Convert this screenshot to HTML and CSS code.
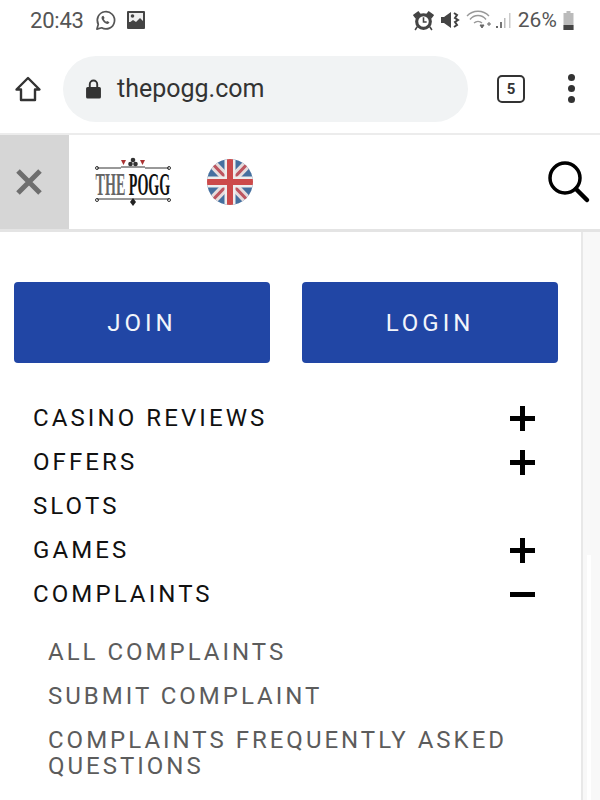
FILE: index.html
```html
<!DOCTYPE html>
<html lang="en">

<head>
  <meta charset="UTF-8">
  <meta name="viewport" content="width=device-width, initial-scale=1.0">
  <title>The Pogg</title>
  <link rel="stylesheet" href="styles.css">
</head>

<body>
  <!-- Phone status bar -->
  <div class="status-bar">
    <div class="status-left">
      <span class="status-time">20:43</span>
      <svg class="status-icon" viewBox="0 0 24 24" width="23" height="23">
        <path d="M3 21l1.500-5A9 9 0 1 1 8 19.600z" fill="none" stroke="#555" stroke-width="1.800" stroke-linejoin="round"/>
        <path d="M8.500 7.500c-1 1-1 2.800 1 5.200s4.500 3.500 5.700 2.500l1-1.300-2.500-1.500-1 .8c-1-.4-2-1.500-2.500-2.700l.9-1-1.300-2.500z" fill="#555"/>
      </svg>
      <svg class="status-icon" viewBox="0 0 18 18" width="18" height="18">
        <rect x="0" y="0" width="18" height="18" rx="1" fill="#444"/>
        <rect x="2" y="2" width="14" height="9" fill="#eee"/>
        <circle cx="5.500" cy="5" r="1.800" fill="#444"/>
        <path d="M2 12l4-3 3 2 4-4 3 3v2H2z" fill="#444"/>
      </svg>
    </div>
    <div class="status-right">
      <svg class="status-icon" viewBox="0 0 20 20" width="21" height="21">
        <circle cx="10" cy="11" r="6.500" fill="none" stroke="#444" stroke-width="3"/>
        <path d="M10 7v4.500h3" fill="none" stroke="#444" stroke-width="1.500"/>
        <path d="M1 5l4-3 1.500 2-4 3zM19 5l-4-3-1.500 2 4 3zM4 16l-2 3M16 16l2 3" fill="#444" stroke="#444" stroke-width="1.500"/>
      </svg>
      <svg class="status-icon" viewBox="0 0 20 20" width="20" height="20">
        <path d="M1 7h3l7-5v16l-7-5H1z" fill="#444"/>
        <path d="M14 3l3 2-2 3 3 2-3 2 2 3-3 2" fill="none" stroke="#444" stroke-width="2"/>
      </svg>
      <svg class="status-icon" viewBox="0 0 46 20" width="46" height="20">
        <path d="M1 6a15 15 0 0 1 22 0M4 9.500a10 10 0 0 1 16 0M8 13a6 6 0 0 1 8 0" fill="none" stroke="#999" stroke-width="1.400"/>
        <path d="M14 15l2 3 2-3zM21 14h4M23 12v4" fill="#666" stroke="#666"/>
        <rect x="30" y="16" width="2" height="2" fill="#666"/>
        <rect x="34" y="12" width="2" height="6" fill="#777"/>
        <rect x="38" y="8" width="1.500" height="10" fill="#bbb"/>
        <rect x="43" y="3" width="1.500" height="15" fill="#ccc"/>
      </svg>
      <span class="status-battery">26%</span>
      <svg class="status-icon" viewBox="0 0 11 19" width="11" height="19">
        <path d="M3.500 0h4v2h3v17H.5V2h3z" fill="#bbb"/>
        <rect x=".5" y="14" width="10" height="5" fill="#444"/>
      </svg>
    </div>
  </div>

  <!-- Browser toolbar -->
  <div class="browser-bar">
    <svg class="home-icon" viewBox="0 0 28 28" width="28" height="28">
      <path d="M2.500 14.500L14 3l11.500 11.500H21V25H7V14.500z" fill="none" stroke="#333" stroke-width="2.400" stroke-linejoin="round"/>
    </svg>
    <div class="url-box">
      <svg viewBox="0 0 16 20" width="17" height="22">
        <path d="M4.500 8V5.500a3.500 3.500 0 0 1 7 0V8" fill="none" stroke="#333" stroke-width="1.800"/>
        <rect x="1" y="8" width="14" height="11" rx="1.500" fill="#333"/>
      </svg>
      <span>thepogg.com</span>
    </div>
    <div class="tab-count">5</div>
    <div class="more-dots"><i></i><i></i><i></i></div>
  </div>

  <!-- Site header -->
  <header class="site-header">
    <div class="close-box">
      <svg viewBox="0 0 28 28" width="28" height="28">
        <path d="M3 3l22 22M25 3L3 25" stroke="#6e6e6e" stroke-width="5"/>
      </svg>
    </div>
    <div class="logo">
      <svg class="logo-top" viewBox="0 0 76 14" width="76" height="14">
        <path d="M2 11h24M50 11h24M26 10h24" stroke="#333" stroke-width="1"/>
        <circle cx="2" cy="11" r="1.500" fill="none" stroke="#333"/>
        <circle cx="74" cy="11" r="1.500" fill="none" stroke="#333"/>
        <path d="M26 3h5l-2.500 5zM45 3h5l-2.500 5z" fill="#a33"/>
        <circle cx="38" cy="3" r="2.300" fill="#333"/>
        <circle cx="35.500" cy="7" r="2.300" fill="#333"/>
        <circle cx="40.500" cy="7" r="2.300" fill="#333"/>
      </svg>
      <div class="logo-text"><span class="logo-the">THE</span> <span>POGG</span></div>
      <svg class="logo-bottom" viewBox="0 0 76 10" width="76" height="10">
        <path d="M2 2h72" stroke="#333" stroke-width="1"/>
        <circle cx="2" cy="3" r="1.500" fill="none" stroke="#333"/>
        <circle cx="74" cy="3" r="1.500" fill="none" stroke="#333"/>
        <path d="M38 1l3 4-3 4-3-4z" fill="#222"/>
      </svg>
    </div>
    <svg class="flag" viewBox="0 0 46 48" width="46" height="48">
      <defs>
        <clipPath id="flag-clip"><circle cx="23" cy="24" r="23"/></clipPath>
      </defs>
      <g clip-path="url(#flag-clip)">
        <rect width="46" height="48" fill="#45709f"/>
        <path d="M0 0l46 48M46 0L0 48" stroke="#e6dcdc" stroke-width="9"/>
        <path d="M0 0l46 48M46 0L0 48" stroke="#bd5660" stroke-width="3"/>
        <path d="M23 0v48M0 24h46" stroke="#eeeeee" stroke-width="11"/>
        <path d="M23 0v48M0 24h46" stroke="#cc4a4a" stroke-width="6"/>
      </g>
    </svg>
    <svg class="search-icon" viewBox="0 0 44 44" width="44" height="44">
      <circle cx="18" cy="18" r="15" fill="none" stroke="#000" stroke-width="3.500"/>
      <path d="M29 29l11 11" stroke="#000" stroke-width="4.500" stroke-linecap="round"/>
    </svg>
  </header>

  <div class="page-body">
    <main class="menu-panel">
      <div class="button-row">
        <a class="btn">JOIN</a>
        <a class="btn">LOGIN</a>
      </div>

      <ul class="main-menu">
        <li><span>CASINO REVIEWS</span><b class="plus"></b></li>
        <li><span>OFFERS</span><b class="plus"></b></li>
        <li><span>SLOTS</span></li>
        <li><span>GAMES</span><b class="plus"></b></li>
        <li><span>COMPLAINTS</span><b class="minus"></b></li>
      </ul>

      <ul class="sub-menu">
        <li>ALL COMPLAINTS</li>
        <li>SUBMIT COMPLAINT</li>
        <li>COMPLAINTS FREQUENTLY ASKED QUESTIONS</li>
      </ul>
    </main>
    <!-- Scrollbar track beside the panel -->
    <div class="scroll-track"><div class="scroll-thumb"></div></div>
  </div>
</body>

</html>
```

FILE: styles.css
```css
html,
body {
  height: 800px;
  overflow: hidden;
}

body {
  margin: 0;
  background-color: #fff;
  color: #000;
  font-family: Roboto, "Liberation Sans", Arial, sans-serif;
}

.status-bar {
  height: 40px;
  padding: 0 26px 0 30px;
  box-sizing: border-box;
  display: flex;
  justify-content: space-between;
  align-items: center;
  color: #555;
  font-size: 21px;
}

.status-left,
.status-right {
  display: flex;
  align-items: center;
  gap: 10px;
}

.status-time {
  font-size: 22px;
  letter-spacing: -.2px;
}

.status-right {
  gap: 6px;
}

.status-battery {
  letter-spacing: .1px;
}

/* Browser toolbar */
.browser-bar {
  height: 95px;
  padding: 4px 0 0 14px;
  display: flex;
  align-items: center;
  box-sizing: border-box;
  border-bottom: 2px solid #ececec;
}

.url-box {
  width: 405px;
  height: 66px;
  margin-left: 21px;
  padding-left: 22px;
  box-sizing: border-box;
  display: flex;
  align-items: center;
  gap: 15px;
  background-color: #f1f3f4;
  border-radius: 33px;
  color: #333;
  font-size: 25px;
}

.tab-count {
  width: 28px;
  height: 28px;
  margin-left: 29px;
  box-sizing: border-box;
  border: 2.500px solid #333;
  border-radius: 5px;
  display: flex;
  align-items: center;
  justify-content: center;
  color: #333;
  font-size: 15px;
  font-weight: bold;
}

.more-dots {
  margin-left: 43px;
  display: flex;
  flex-direction: column;
  gap: 4px;
}

.more-dots i {
  width: 7px;
  height: 7px;
  border-radius: 50%;
  background-color: #333;
}

/* Site header */
.site-header {
  height: 94px;
  display: flex;
  align-items: center;
  background-color: #fff;
  border-bottom: 3px solid #e4e4e4;
}

.close-box {
  width: 69px;
  height: 100%;
  padding-right: 12px;
  box-sizing: border-box;
  display: flex;
  align-items: center;
  justify-content: center;
  background-color: #d6d6d6;
}

.logo {
  width: 76px;
  margin-left: 26px;
  display: flex;
  flex-direction: column;
  align-items: center;
}

.logo svg {
  display: block;
}

.logo-text {
  margin: -1px 0;
  font-family: "Liberation Serif", serif;
  font-size: 32px;
  font-weight: bold;
  line-height: 28px;
  transform: scaleX(.44);
  white-space: nowrap;
  color: #111;
}

.logo-the {
  color: #666;
}

.flag {
  margin-left: 36px;
}

.search-icon {
  margin-left: auto;
  margin-right: 9px;
}

/* Slide-out menu */
.page-body {
  display: flex;
  height: 571px;
  background-color: #f8f8f8;
}

.menu-panel {
  width: 583px;
  box-sizing: border-box;
  padding: 50px 0 0 14px;
  background-color: #fff;
  border-right: 2px solid #e8e8e8;
}

.scroll-track {
  flex: 1;
  padding: 323px 0 0 4px;
}

.scroll-thumb {
  width: 4px;
  height: 250px;
  background-color: #fff;
}

.button-row {
  width: 544px;
  display: flex;
  justify-content: space-between;
}

.btn {
  width: 256px;
  height: 81px;
  display: flex;
  align-items: center;
  justify-content: center;
  background-color: #2146a5;
  border-radius: 4px;
  color: #f2f5fb;
  font-size: 24px;
  letter-spacing: 4px;
}

.main-menu,
.sub-menu {
  list-style: none;
  margin: 0;
  padding: 0;
}

.main-menu {
  margin-top: 33px;
  width: 502px;
  padding-left: 19px;
}

.main-menu li {
  height: 44px;
  display: flex;
  align-items: center;
  justify-content: space-between;
  font-size: 24px;
  letter-spacing: 3.100px;
  color: #111;
}

.plus,
.minus {
  position: relative;
  width: 25px;
  height: 25px;
}

.plus::before,
.minus::before {
  content: "";
  position: absolute;
  left: 0;
  top: 10px;
  width: 25px;
  height: 5px;
  background-color: #000;
}

.plus::after {
  content: "";
  position: absolute;
  left: 10px;
  top: 0;
  width: 5px;
  height: 25px;
  background-color: #000;
}

.sub-menu {
  margin-top: 23px;
  width: 480px;
  padding-left: 34px;
  color: #5c5c5c;
  font-size: 24px;
  letter-spacing: 3px;
}

.sub-menu li {
  line-height: 26px;
  margin-bottom: 18px;
}
```
